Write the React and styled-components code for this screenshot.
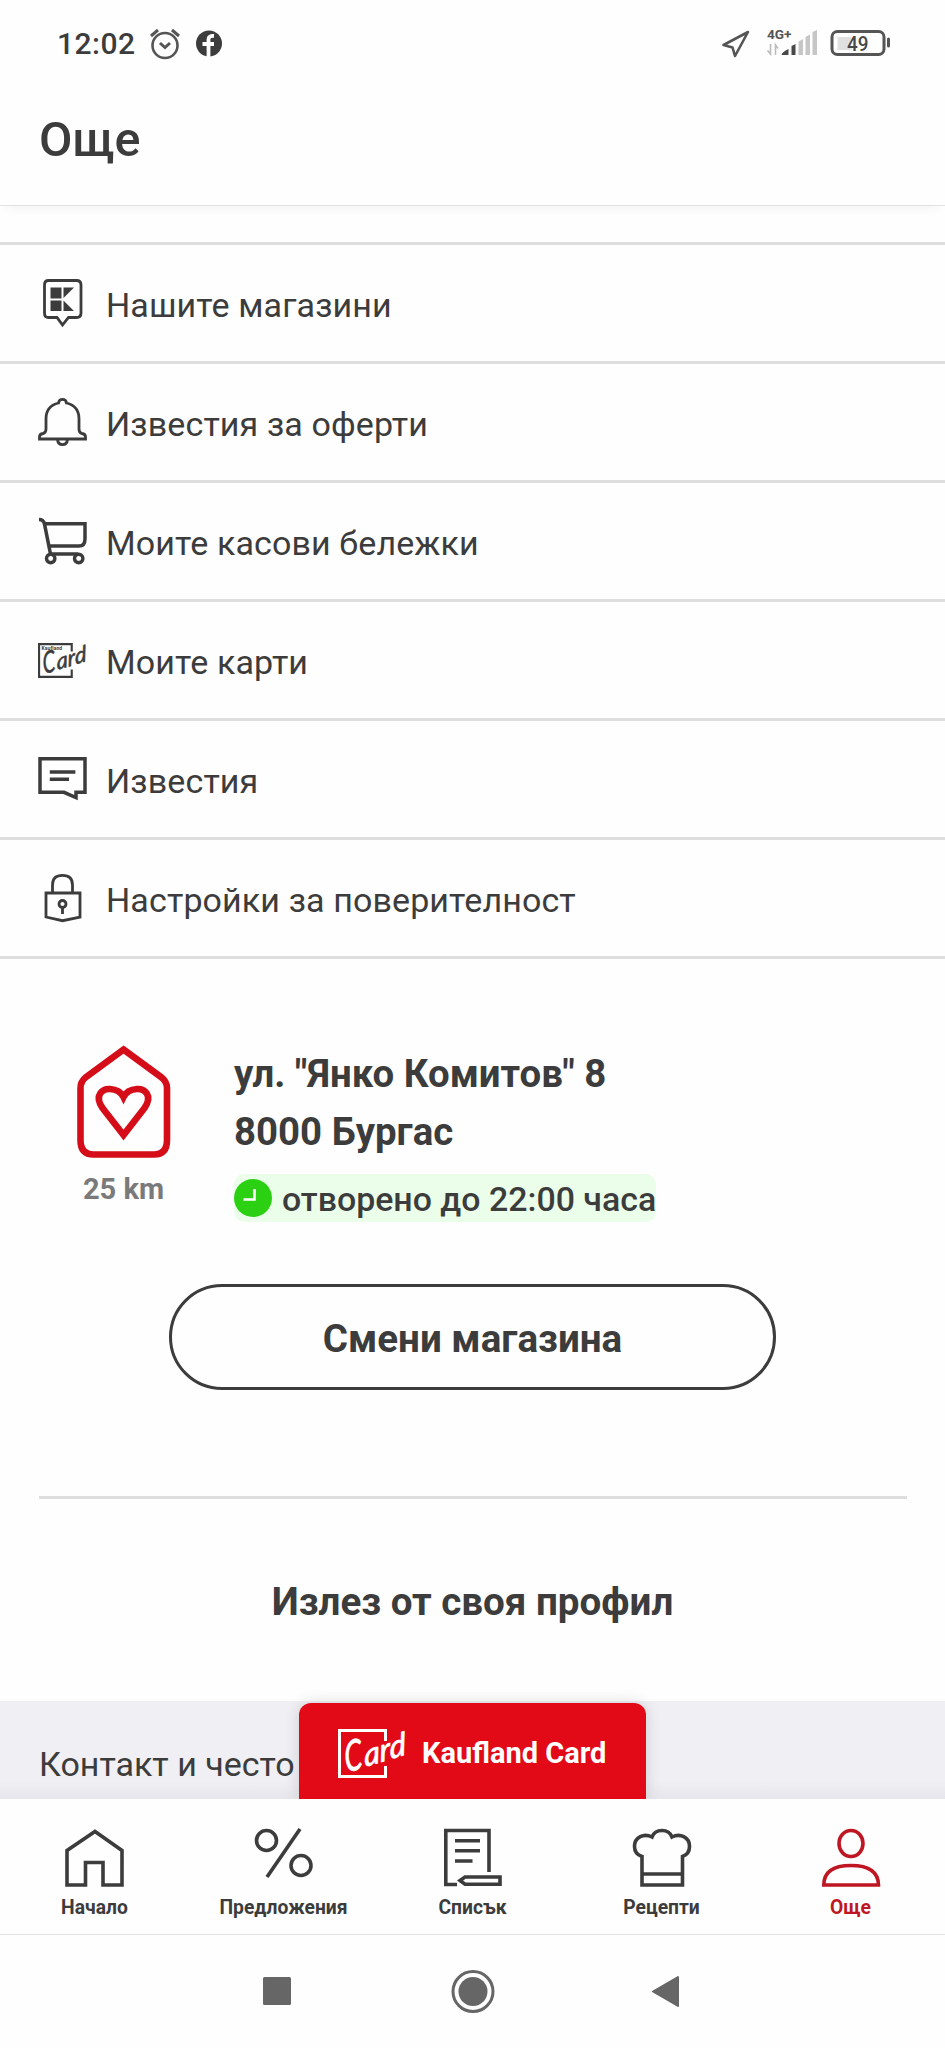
import React from 'react';
import styled, { createGlobalStyle } from 'styled-components';

const GlobalStyle = createGlobalStyle`
  * {
    box-sizing: border-box;
  }
  body {
    margin: 0;
    background: #fefefe;
    color: #3c3c3c;
    font-family: Roboto, "Liberation Sans", sans-serif;
  }
`;

const Screen = styled.div`
  width: 945px;
  height: 2048px;
  display: flex;
  flex-direction: column;
  overflow: hidden;
`;

const StatusBar = styled.div`
  height: 88px;
  flex: none;
  display: flex;
  align-items: center;
  justify-content: space-between;
  padding: 0 54px 0 57px;
`;

const StatusGroup = styled.div`
  display: flex;
  align-items: center;
`;

const Clock = styled.div`
  width: 91px;
  font-size: 30px;
  font-weight: 500;
  letter-spacing: 0.5px;
  line-height: 36px;
`;

const Header = styled.header`
  height: 118px;
  flex: none;
  padding: 22px 39px 0;
  border-bottom: 1px solid #e2e2e2;
  box-shadow: 0 8px 12px -6px rgba(0, 0, 0, 0.05);
`;

const Title = styled.h1`
  margin: 0;
  font-size: 48.5px;
  font-weight: 500;
  line-height: 60px;
`;

const Menu = styled.nav`
  margin-top: 36px;
  border-top: 3px solid #dedede;
`;

const MenuItem = styled.div`
  height: 119px;
  display: flex;
  align-items: center;
  padding: 0 38px;
  gap: 19px;
  border-bottom: 3px solid #dedede;
  font-size: 34px;
  letter-spacing: 0.12px;
`;

const MenuIcon = styled.svg`
  width: 49px;
  height: 52px;
  flex: none;
  overflow: visible;
`;

const MenuLabel = styled.span`
  padding-top: 4px;
  white-space: nowrap;
`;

const Store = styled.section`
  display: flex;
  padding: 86px 76px 0;
`;

const Distance = styled.div`
  width: 95px;
  display: flex;
  flex-direction: column;
  align-items: center;
  color: #7a7a7a;
  font-size: 29px;
  font-weight: 700;
  line-height: 34px;
  white-space: nowrap;

  svg {
    margin-bottom: 13px;
  }
`;

const StoreInfo = styled.div`
  margin-left: 63px;
`;

const Address = styled.div`
  font-size: 38.4px;
  font-weight: 700;
  line-height: 57.5px;
  white-space: nowrap;
`;

const OpenBadge = styled.div`
  display: flex;
  align-items: center;
  gap: 10px;
  height: 48px;
  margin-top: 14px;
  border-radius: 10px;
  background: #ebfeea;
  font-size: 33.9px;
  font-weight: 500;
  white-space: nowrap;

  span {
    padding-top: 3px;
  }
`;

const OutlineButton = styled.button`
  width: 607px;
  height: 106px;
  margin: 62px auto 0;
  flex: none;
  border: 3px solid #3c3c3c;
  border-radius: 53px;
  background: transparent;
  color: inherit;
  font: 700 38.6px/1 Roboto, sans-serif;
  padding: 4px 0 0;
`;

const Divider = styled.hr`
  width: 868px;
  height: 3px;
  flex: none;
  margin: 106px auto 0;
  border: 0;
  background: #dedede;
`;

const Logout = styled.div`
  padding-top: 81px;
  height: 202px;
  flex: none;
  text-align: center;
  font-size: 38.6px;
  font-weight: 700;
  line-height: 44px;
`;

const Footer = styled.div`
  height: 98px;
  flex: none;
  display: flex;
  align-items: flex-end;
  padding-left: 39px;
  background: linear-gradient(#f0eff4 82%, #e6e6ea);
`;

const FooterLink = styled.div`
  width: 260px;
  padding-bottom: 14px;
  font-size: 34px;
  line-height: 42px;
  white-space: nowrap;
`;

const CardTab = styled.div`
  width: 347px;
  height: 96px;
  display: flex;
  align-items: center;
  padding: 4px 0 0 39px;
  gap: 15px;
  border-radius: 12px 12px 0 0;
  background: #e20a17;
  box-shadow: 0 0 16px rgba(0, 0, 0, 0.14);
  color: #fff;
  font-size: 29px;
  font-weight: 700;
  white-space: nowrap;
`;

const TabBar = styled.nav`
  height: 136px;
  flex: none;
  display: grid;
  grid-template-columns: repeat(5, 1fr);
  background: #fefefe;
  border-bottom: 1px solid #e2e2e2;
  position: relative;
`;

const Tab = styled.div`
  display: flex;
  flex-direction: column;
  align-items: center;
  padding-top: 29px;
  color: ${p => (p.$active ? '#be1622' : '#3c3c3c')};
  font-size: 19.3px;
  font-weight: 700;
  line-height: 24px;

  svg {
    margin-bottom: 9px;
    overflow: visible;
  }
`;

const SystemBar = styled.div`
  flex: 1;
  display: flex;
  justify-content: center;
`;

const CardLogo = ({ width, height, small }) => (
  <svg width={width} height={height} viewBox="0 0 69 49" overflow="visible">
    <path d="M47.500 12V1.500H1.500V47.500H47.500V37" fill="none" stroke="currentColor" strokeWidth="3" />
    {small && (
      <text x="5" y="10" fontSize="7" fontWeight="700" fontFamily="Roboto" fill="currentColor">Kaufland</text>
    )}
    <g fontFamily="Lato, sans-serif" fontStyle="italic" fontWeight="400" fill="currentColor" stroke="currentColor" strokeWidth="0.800">
      <text transform="translate(8 43.500) rotate(-14) skewX(-8) scale(0.68 1)" fontSize="42">C</text>
      <text transform="translate(27 38) rotate(-17) skewX(-12) scale(1.030 1)" fontSize="31">ard</text>
    </g>
  </svg>
);

const menu = [
  {
    label: 'Нашите магазини',
    icon: (
      <>
        <path d="M10.500 3.500H38.500Q43 3.500 43 8V36Q43 40.500 38.500 40.500H30.500L24.500 48L19 40.500H10.500Q6.500 40.500 6.500 36V8Q6.500 3.500 10.500 3.500Z" />
        <path d="M12.500 10.500H23.500V21.500H12.500ZM12.500 23.500H23.500V34H12.500ZM25.500 10.500H36L25.500 21ZM25.500 23.500L36 34H25.500Z" fill="#3c3c3c" stroke="none" />
      </>
    ),
  },
  {
    label: 'Известия за оферти',
    icon: (
      <path d="M1.500 43V41Q1.500 38 5 37.500Q8 37 8 33V23Q8 10 20.500 7Q21 3.400 24.500 3.400T28.500 7Q41 10 41 23V33Q41 37 44 37.500Q47.500 38 47.500 41V43ZM19.500 43.500Q20 48.600 24.500 48.600T29.500 43.500" />
    ),
  },
  {
    label: 'Моите касови бележки',
    icon: (
      <>
        <path d="M1 4.500Q5.500 4.500 6.500 9L12.500 39H40M6.500 8.800H47V24Q47 31 41 31H11" strokeWidth="3.500" />
        <circle cx="12.700" cy="43.500" r="4.200" fill="#fefefe" strokeWidth="3.400" />
        <circle cx="40.700" cy="43.500" r="4.200" fill="#fefefe" strokeWidth="3.400" />
      </>
    ),
  },
  { label: 'Моите карти', card: true },
  {
    label: 'Известия',
    icon: (
      <path d="M2 5.700H47V39.300H38V44.500L26 39.300H2ZM11.800 19H37.400M11.800 26.300H31" strokeWidth="3.500" />
    ),
  },
  {
    label: 'Настройки за поверителност',
    icon: (
      <>
        <path d="M8 21H42V45L24.500 48.700L8 45ZM14.500 21V13Q14.500 3.400 24.500 3.400T34.500 13V21M24.500 36V42" />
        <circle cx="24.500" cy="32" r="3.500" />
      </>
    ),
  },
];

const tabs = [
  {
    label: 'Начало',
    icon: <path d="M2 57V22.500L30 3.500L57 22.500V57H38V34.500H20.500V57Z" />,
  },
  {
    label: 'Предложения',
    icon: (
      <>
        <circle cx="12.500" cy="12.500" r="10" />
        <circle cx="47" cy="37.500" r="10" />
        <path d="M46 1L13 49" />
      </>
    ),
  },
  {
    label: 'Списък',
    icon: (
      <>
        <path d="M12 12.700H37M12 22.700H37M12 33H29.500M22 49H57V56.300H22L17 52.500Z" />
        <path d="M14 56.500H2.800V2.500H46V44" />
      </>
    ),
  },
  {
    label: 'Рецепти',
    icon: (
      <path d="M10 57V28.500Q2.500 26 2.500 18.500C2.500 9 12 5 20 9Q22.500 2.500 30 2.500T40 9C48 5 57.500 9 57.500 18.500Q57.500 26 50.500 28.500V57ZM10 46H50.500" />
    ),
  },
  {
    label: 'Още',
    active: true,
    icon: (
      <>
        <ellipse cx="30" cy="15.500" rx="12" ry="13" />
        <path d="M2.800 57Q2.800 37.500 30 37.500T57.500 57Z" />
      </>
    ),
  },
];

function Status() {
  return (
    <StatusBar>
      <StatusGroup>
        <Clock>12:02</Clock>
        <svg width="76" height="34" viewBox="0 0 76 34" fill="none" stroke="#555" strokeWidth="2.600">
          <circle cx="17" cy="18.500" r="12.500" />
          <path d="M3 9L10 3M31 9L24 3M12 16L17 20.500L22 16" strokeWidth="3" />
          <circle cx="61" cy="16.500" r="13" fill="#3c3c3c" stroke="none" />
          <path d="M60.500 30V12.500Q60.500 8.500 66 9M54.500 17H66" stroke="#fefefe" strokeWidth="3.800" />
        </svg>
      </StatusGroup>
      <svg width="170" height="34" viewBox="0 0 170 34" fill="none" stroke="#555" strokeWidth="3">
        <path d="M2.500 18L27 5L14 29L11.500 20.500Z" strokeWidth="2.600" strokeLinejoin="round" />
        <text x="46" y="12" fontFamily="Roboto" fontSize="13.500" fontWeight="700" fill="#555" stroke="none" textLength="24.500" lengthAdjust="spacingAndGlyphs">4G+</text>
        <path d="M49.500 17V27L46.500 23.500M54.500 28V18L57 21.500" stroke="#bbb" strokeWidth="1.600" />
        <path d="M60.500 28Q61 25 67.500 22V28ZM70.500 28V19L74.500 17V28Z" fill="#484848" stroke="none" />
        <path d="M77.500 28V14.500L82 12V28ZM84.500 28V10L89 7.500V28ZM91.500 28V5L96 3V28Z" fill="#c6c6c6" stroke="none" />
        <rect x="111" y="4.500" width="52" height="23" rx="5.500" />
        <rect x="116.500" y="10" width="14" height="13" fill="#e0e0e0" stroke="none" />
        <path d="M167.500 12V19" strokeLinecap="round" />
        <text x="126" y="23.500" fontFamily="Roboto" fontSize="19.500" fontWeight="500" fill="#484848" stroke="none" textLength="21.500" lengthAdjust="spacingAndGlyphs">49</text>
      </svg>
    </StatusBar>
  );
}

function App() {
  return (
    <>
      <GlobalStyle />
      <Screen>
        <Status />
        <Header>
          <Title>Още</Title>
        </Header>

        <Menu>
          {menu.map(item => (
            <MenuItem key={item.label}>
              {item.card ? (
                <CardLogo width={49} height={35} small />
              ) : (
                <MenuIcon viewBox="0 0 49 52" fill="none" stroke="#3c3c3c" strokeWidth="2.800">
                  {item.icon}
                </MenuIcon>
              )}
              <MenuLabel>{item.label}</MenuLabel>
            </MenuItem>
          ))}
        </Menu>

        <Store>
          <Distance>
            <svg width="95" height="114" viewBox="0 0 95 114" fill="none" stroke="#d40d19" strokeWidth="6.600">
              <path d="M47.500 4.500L85 32Q91 36.500 91 43V95Q91 109.500 78 109.500H17.500Q4.500 109.500 4.500 95V43Q4.500 36.500 10 32Z" />
              <path d="M47.500 90L26.500 63C17.500 50 27 43.500 34 44C41 44.500 45 47 47.500 52C50 47 54 44.500 61 44C68 43.500 77.500 50 68.500 63Z" />
            </svg>
            25 km
          </Distance>
          <StoreInfo>
            <Address>ул. "Янко Комитов" 8</Address>
            <Address>8000 Бургас</Address>
            <OpenBadge>
              <svg width="38" height="38" viewBox="0 0 38 38">
                <circle cx="19" cy="19" r="19" fill="#2bd013" />
                <path d="M20.500 10V20.500H9.500" fill="none" stroke="#fff" strokeWidth="2.600" />
              </svg>
              <span>отворено до 22:00 часа</span>
            </OpenBadge>
          </StoreInfo>
        </Store>

        <OutlineButton>Смени магазина</OutlineButton>
        <Divider />
        <Logout>Излез от своя профил</Logout>

        <Footer>
          <FooterLink>Контакт и често</FooterLink>
          <CardTab>
            <CardLogo width={69} height={49} />
            Kaufland Card
          </CardTab>
        </Footer>

        <TabBar>
          {tabs.map(tab => (
            <Tab key={tab.label} $active={tab.active}>
              <svg width="59" height="59" viewBox="0 0 59 59" fill="none" stroke="currentColor" strokeWidth="3.600">
                {tab.icon}
              </svg>
              {tab.label}
            </Tab>
          ))}
        </TabBar>

        <SystemBar>
          <svg width="420" height="113" viewBox="0 0 420 113" fill="#666">
            <rect x="0" y="42" width="28" height="28" rx="1.500" />
            <circle cx="210" cy="56.500" r="14.500" />
            <circle cx="210" cy="56.500" r="20" fill="none" stroke="#666" strokeWidth="3" />
            <path d="M390 56.500L415 42V71Z" stroke="#666" strokeWidth="2" strokeLinejoin="round" />
          </svg>
        </SystemBar>
      </Screen>
    </>
  );
}

export default App;
